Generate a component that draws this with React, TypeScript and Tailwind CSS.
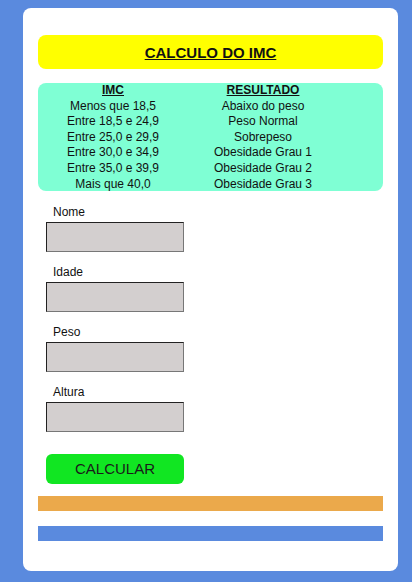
import React from 'react';

const faixas = [
  ['Menos que 18,5', 'Abaixo do peso'],
  ['Entre 18,5 e 24,9', 'Peso Normal'],
  ['Entre 25,0 e 29,9', 'Sobrepeso'],
  ['Entre 30,0 e 34,9', 'Obesidade Grau 1'],
  ['Entre 35,0 e 39,9', 'Obesidade Grau 2'],
  ['Mais que 40,0', 'Obesidade Grau 3'],
];

const campos = ['Nome', 'Idade', 'Peso', 'Altura'];

export default function App() {
  return (
    <div className="h-[582px] overflow-hidden bg-[#5a8ade] pl-[23px] pt-[8px] font-['Liberation_Sans',Arial,sans-serif] text-[#111]">
      <div className="w-[375px] bg-white rounded-[8px] h-[563px] px-[15px] pt-[27px]">
        {/* titulo */}
        <div className="h-[34px] bg-[#ffff00] rounded-[8px] flex items-center justify-center">
          <h1 className="text-[15px] font-bold underline leading-none">CALCULO DO IMC</h1>
        </div>

        {/* tabela */}
        <div className="mt-[14px] h-[108px] bg-[#7fffd4] rounded-[8px] text-[12px] leading-[15.6px]">
          <div className="grid grid-cols-[150px_150px] font-bold underline text-center">
            <span>IMC</span>
            <span>RESULTADO</span>
          </div>
          {faixas.map(([imc, res]) => (
            <div key={imc} className="grid grid-cols-[150px_150px] text-center">
              <span>{imc}</span>
              <span>{res}</span>
            </div>
          ))}
        </div>

        {/* formulario */}
        <form className="mt-[9px] pl-[8px] flex flex-col gap-[8px]" onSubmit={e => e.preventDefault()}>
          {campos.map(c => (
            <div key={c} className="flex flex-col">
              <label className="text-[12px] leading-[20px] pt-[2px] pl-[7px]">{c}</label>
              <input
                type="text"
                className="w-[138px] h-[30px] bg-[#d3cfcf] border border-t-[#222] border-l-[#222] border-b-[#777] border-r-[#777] outline-none"
              />
            </div>
          ))}
          <button
            type="submit"
            className="mt-[14px] w-[138px] h-[30px] rounded-[6px] bg-[#11e622] text-[15px] text-[#1a1a1a]"
          >
            CALCULAR
          </button>
        </form>

        <div className="mt-[12px] h-[15px] bg-[#eba94b]" />
        <div className="mt-[15px] h-[15px] bg-[#5a8ade]" />
      </div>
    </div>
  );
}
